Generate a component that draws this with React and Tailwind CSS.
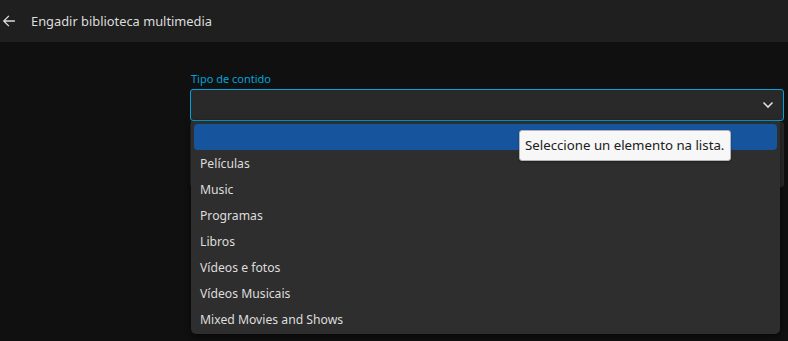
import React from "react";

const items = [
  "Películas",
  "Music",
  "Programas",
  "Libros",
  "Vídeos e fotos",
  "Vídeos Musicais",
  "Mixed Movies and Shows",
];

export default function App() {
  return (
    <div
      className="w-[788px] h-[341px] overflow-hidden bg-[#101010] text-[#dddddd]"
      style={{ fontFamily: '"Noto Sans", sans-serif' }}
    >
      <header className="h-[42px] bg-[#1f1f1f] flex items-center">
        <svg
          width="14"
          height="14"
          viewBox="0 0 24 24"
          className="ml-[2px] text-[#dddddd]"
          fill="none"
          stroke="currentColor"
          strokeWidth="2.2"
          strokeLinecap="square"
        >
          <path d="M21 12H4M11 4l-8 8 8 8" />
        </svg>
        <span className="ml-[15px] text-[12.85px] leading-none">Engadir biblioteca multimedia</span>
      </header>

      <main className="pl-[190px] pr-[4px] pt-[29px]">
        <div className="relative">
          <label className="block pl-[1px] text-[11px] leading-[15px] text-[#00a4dc]">Tipo de contido</label>
          <div className="mt-[3px] h-[32px] rounded-[3px] border border-[#00a4dc] bg-[#292929] flex items-center justify-end pr-[9px]">
            <svg width="12" height="8" viewBox="0 0 12 8" fill="none" stroke="#dddddd" strokeWidth="1.6">
              <path d="M1.5 1.5l4.5 4.5 4.5-4.5" />
            </svg>
          </div>
          <div className="mt-[1px] h-[65px] rounded-[3px] bg-[#2a2a2a]" />

          <div className="absolute left-[1px] top-[50px] w-[589px] rounded-b-[5px] bg-[#2e2e2e] shadow-[0_2px_6px_rgba(0,0,0,0.6)] pt-[3px] pb-[2px]">
            <div className="mx-[3px] h-[26px] rounded-[4px] bg-[#17549e]" />
            {items.map((t) => (
              <div key={t} className="h-[26px] flex items-center pt-[2px] pl-[9px] text-[12.2px] text-[#dddddd]">
                {t}
              </div>
            ))}
          </div>

          <div className="absolute left-[329px] top-[59px] h-[31px] rounded-[3px] border border-[#b4b4b4] bg-[#f7f7f7] flex items-center pl-[5px] pr-[6px] text-[13.25px] text-[#202020] shadow-[0_1px_2px_rgba(0,0,0,0.3)]">
            Seleccione un elemento na lista.
          </div>
        </div>
      </main>
    </div>
  );
}
